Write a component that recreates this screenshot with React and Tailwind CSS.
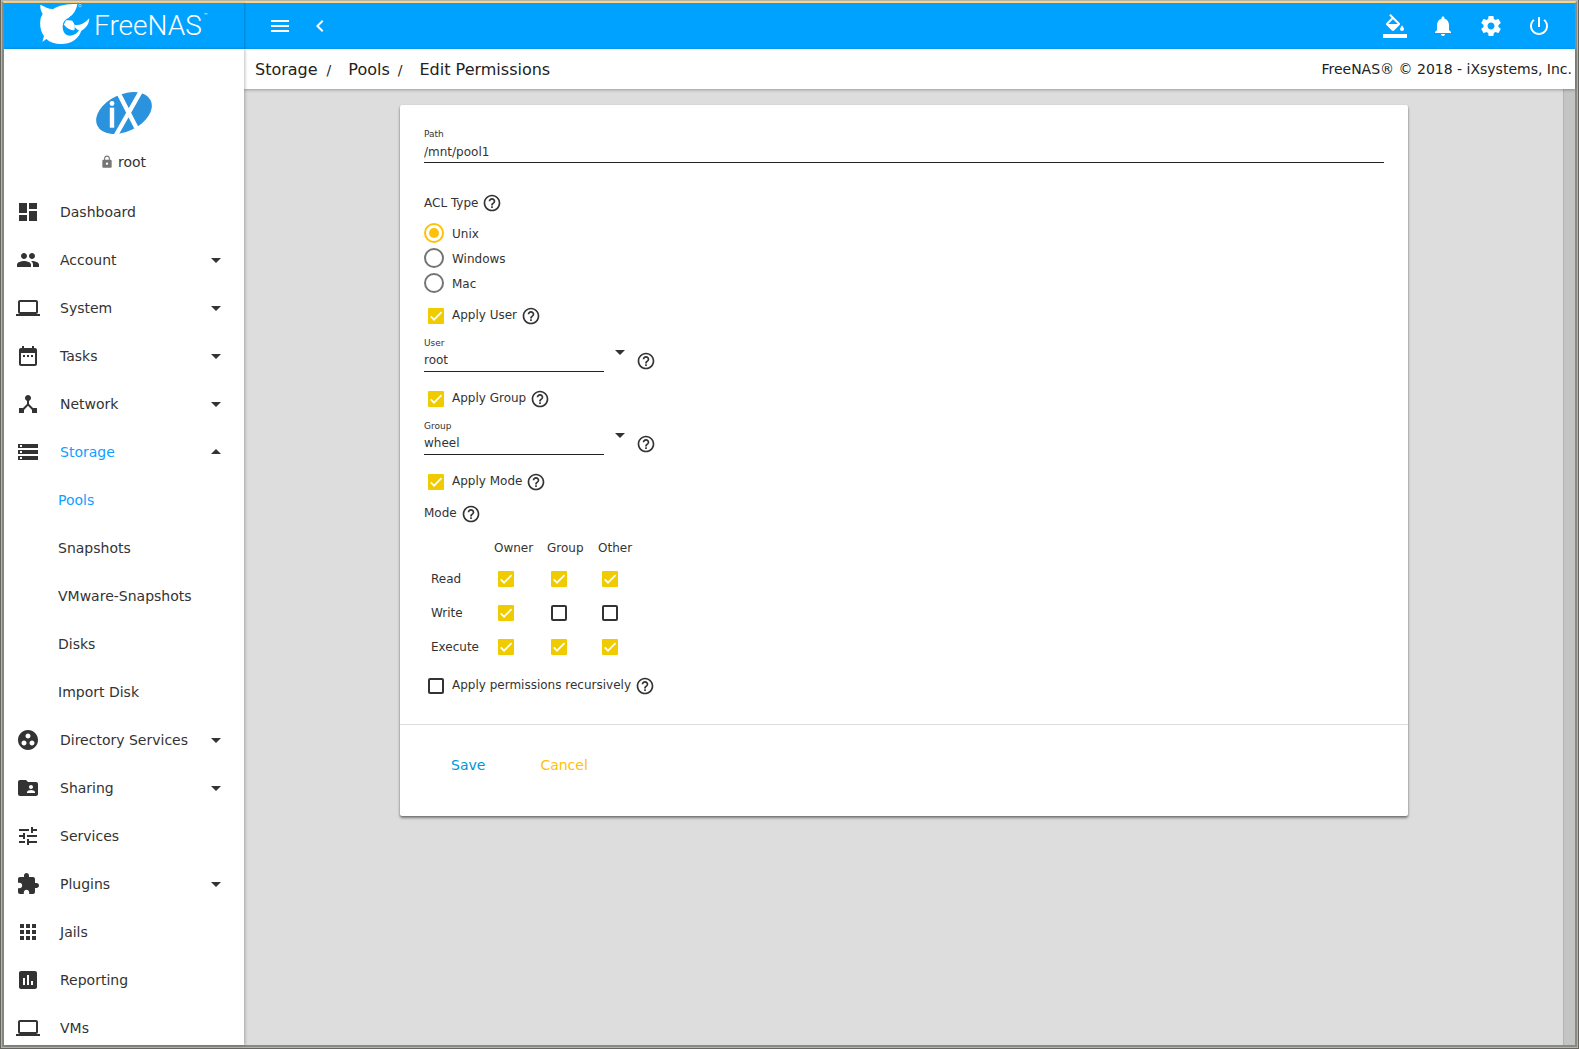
import React from "react";

const ICONS = {
  menu: "M3 18h18v-2H3v2zm0-5h18v-2H3v2zm0-7v2h18V6H3z",
  chevronLeft: "M15.41 7.41L14 6l-6 6 6 6 1.41-1.41L10.83 12z",
  fill: "M16.56 8.94L7.62 0 6.21 1.41l2.38 2.38-5.15 5.15c-.59.59-.59 1.54 0 2.12l5.5 5.5c.29.29.68.44 1.06.44s.77-.15 1.06-.44l5.5-5.5c.59-.58.59-1.53 0-2.12zM5.21 10L10 5.21 14.79 10H5.21zM19 11.5s-2 2.17-2 3.5c0 1.1.9 2 2 2s2-.9 2-2c0-1.33-2-3.5-2-3.5zM0 20h24v4H0z",
  bell: "M12 22c1.1 0 2-.9 2-2h-4c0 1.1.89 2 2 2zm6-6v-5c0-3.07-1.64-5.64-4.5-6.32V4c0-.83-.67-1.5-1.5-1.5s-1.5.67-1.5 1.5v.68C7.63 5.36 6 7.92 6 11v5l-2 2v1h16v-1l-2-2z",
  settings: "M19.43 12.98c.04-.32.07-.64.07-.98s-.03-.66-.07-.98l2.11-1.65c.19-.15.24-.42.12-.64l-2-3.46c-.12-.22-.39-.3-.61-.22l-2.49 1c-.52-.4-1.08-.73-1.69-.98l-.38-2.65C14.46 2.18 14.25 2 14 2h-4c-.25 0-.46.18-.49.42l-.38 2.65c-.61.25-1.17.59-1.69.98l-2.49-1c-.23-.09-.49 0-.61.22l-2 3.46c-.13.22-.07.49.12.64l2.11 1.65c-.04.32-.07.65-.07.98s.03.66.07.98l-2.11 1.65c-.19.15-.24.42-.12.64l2 3.46c.12.22.39.3.61.22l2.49-1c.52.4 1.08.73 1.69.98l.38 2.65c.03.24.24.42.49.42h4c.25 0 .46-.18.49-.42l.38-2.65c.61-.25 1.17-.59 1.69-.98l2.49 1c.23.09.49 0 .61-.22l2-3.46c.12-.22.07-.49-.12-.64l-2.11-1.65zM12 15.5c-1.93 0-3.5-1.57-3.5-3.5s1.57-3.5 3.5-3.5 3.5 1.57 3.5 3.5-1.57 3.5-3.5 3.5z",
  power: "M13 3h-2v10h2V3zm4.83 2.17l-1.42 1.42C17.99 7.86 19 9.81 19 12c0 3.87-3.13 7-7 7s-7-3.13-7-7c0-2.19 1.01-4.14 2.58-5.42L6.17 5.17C4.23 6.82 3 9.26 3 12c0 4.97 4.03 9 9 9s9-4.03 9-9c0-2.74-1.23-5.18-3.17-6.83z",
  lock: "M18 8h-1V6c0-2.76-2.24-5-5-5S7 3.24 7 6v2H6c-1.1 0-2 .9-2 2v10c0 1.1.9 2 2 2h12c1.1 0 2-.9 2-2V10c0-1.1-.9-2-2-2zm-6 9c-1.1 0-2-.9-2-2s.9-2 2-2 2 .9 2 2-.9 2-2 2zm3.1-9H8.9V6c0-1.71 1.39-3.1 3.1-3.1 1.71 0 3.1 1.39 3.1 3.1v2z",
  dashboard: "M3 13h8V3H3v10zm0 8h8v-6H3v6zm10 0h8V11h-8v10zm0-18v6h8V3h-8z",
  people: "M16 11c1.66 0 2.99-1.34 2.99-3S17.66 5 16 5c-1.66 0-3 1.34-3 3s1.34 3 3 3zm-8 0c1.66 0 2.99-1.34 2.99-3S9.66 5 8 5C6.34 5 5 6.34 5 8s1.34 3 3 3zm0 2c-2.33 0-7 1.17-7 3.5V19h14v-2.5c0-2.33-4.67-3.5-7-3.5zm8 0c-.29 0-.62.02-.97.05 1.16.84 1.97 1.97 1.97 3.45V19h6v-2.5c0-2.33-4.67-3.5-7-3.5z",
  laptop: "M20 18c1.1 0 1.99-.9 1.99-2L22 6c0-1.1-.9-2-2-2H4c-1.1 0-2 .9-2 2v10c0 1.1.9 2 2 2H0v2h24v-2h-4zM4 6h16v10H4V6z",
  calendar: "M9 11H7v2h2v-2zm4 0h-2v2h2v-2zm4 0h-2v2h2v-2zm2-7h-1V2h-2v2H8V2H6v2H5c-1.11 0-1.99.9-1.99 2L3 20c0 1.1.89 2 2 2h14c1.1 0 2-.9 2-2V6c0-1.1-.9-2-2-2zm0 16H5V9h14v11z",
  hub: "M17 16l-4-4V8.82C14.16 8.4 15 7.3 15 6c0-1.66-1.34-3-3-3S9 4.34 9 6c0 1.3.84 2.4 2 2.82V12l-4 4H3v5h5v-3.05l4-4.2 4 4.2V21h5v-5h-4z",
  storage: "M2 20h20v-4H2v4zm2-3h2v2H4v-2zM2 4v4h20V4H2zm4 3H4V5h2v2zm-4 7h20v-4H2v4zm2-3h2v2H4v-2z",
  groupWork: "M12 2C6.48 2 2 6.48 2 12s4.48 10 10 10 10-4.48 10-10S17.52 2 12 2zM8 17.5c-1.38 0-2.5-1.12-2.5-2.5s1.12-2.5 2.5-2.5 2.5 1.12 2.5 2.5-1.12 2.5-2.5 2.5zM9.5 8c0-1.38 1.12-2.5 2.5-2.5s2.5 1.12 2.5 2.5-1.12 2.5-2.5 2.5S9.5 9.38 9.5 8zm6.5 9.5c-1.38 0-2.5-1.12-2.5-2.5s1.12-2.5 2.5-2.5 2.5 1.12 2.5 2.5-1.12 2.5-2.5 2.5z",
  folderShared: "M20 6h-8l-2-2H4c-1.1 0-1.99.9-1.99 2L2 18c0 1.1.9 2 2 2h16c1.1 0 2-.9 2-2V8c0-1.1-.9-2-2-2zm-5 3c1.1 0 2 .9 2 2s-.9 2-2 2-2-.9-2-2 .9-2 2-2zm4 8h-8v-1c0-1.33 2.67-2 4-2s4 .67 4 2v1z",
  tune: "M3 17v2h6v-2H3zM3 5v2h10V5H3zm10 16v-2h8v-2h-8v-2h-2v6h2zM7 9v2H3v2h4v2h2V9H7zm14 4v-2H11v2h10zm-6-4h2V7h4V5h-4V3h-2v6z",
  extension: "M20.5 11H19V7c0-1.1-.9-2-2-2h-4V3.5C13 2.12 11.88 1 10.5 1S8 2.12 8 3.5V5H4c-1.1 0-1.99.9-1.99 2v3.8H3.5c1.49 0 2.7 1.21 2.7 2.7s-1.21 2.7-2.7 2.7H2V20c0 1.1.9 2 2 2h3.8v-1.5c0-1.49 1.21-2.7 2.7-2.7 1.49 0 2.7 1.21 2.7 2.7V22H17c1.1 0 2-.9 2-2v-4h1.5c1.38 0 2.5-1.12 2.5-2.5S21.88 11 20.5 11z",
  apps: "M4 8h4V4H4v4zm6 12h4v-4h-4v4zm-6 0h4v-4H4v4zm0-6h4v-4H4v4zm6 0h4v-4h-4v4zm6-10v4h4V4h-4zm-6 4h4V4h-4v4zm6 6h4v-4h-4v4zm0 6h4v-4h-4v4z",
  assessment: "M19 3H5c-1.1 0-2 .9-2 2v14c0 1.1.9 2 2 2h14c1.1 0 2-.9 2-2V5c0-1.1-.9-2-2-2zM9 17H7v-7h2v7zm4 0h-2V7h2v10zm4 0h-2v-4h2v4z",
  help: "M11 18h2v-2h-2v2zm1-16C6.48 2 2 6.48 2 12s4.48 10 10 10 10-4.48 10-10S17.52 2 12 2zm0 18c-4.41 0-8-3.59-8-8s3.59-8 8-8 8 3.59 8 8-3.59 8-8 8zm0-14c-2.21 0-4 1.79-4 4h2c0-1.1.9-2 2-2s2 .9 2 2c0 2-3 1.75-3 5h2c0-2.25 3-2.5 3-5 0-2.21-1.79-4-4-4z",
  down: "M7 10l5 5 5-5z",
  up: "M7 14l5-5 5 5z",
};

function Icon({ name, className = "size-6" }) {
  return (
    <svg viewBox="0 0 24 24" fill="currentColor" aria-hidden="true" className={`shrink-0 ${className}`}>
      <path d={ICONS[name]} />
    </svg>
  );
}

function IconButton({ name, label }) {
  return (
    <button type="button" aria-label={label} className="text-white">
      <Icon name={name} />
    </button>
  );
}

function Logo() {
  return (
    <a href="#home" aria-label="FreeNAS" className="block">
      <svg width="180" height="46" viewBox="0 0 180 46" fill="none" className="block">
        <g transform="scale(0.3333)">
          <path
            fill="#fff"
            d="M1 5C15 12 28 19 40 18C55 7 80 3 112 3C110 19 102 33 87 44C95 50 101 57 104 66C118 68 134 62 148 46C147 64 138 76 124 83C117 104 98 123 63 123C45 123 30 118 19 108L7 117L12 99C2 86 -2 68 2 46C3 40 9 35 7 31C3 25 0 16 1 5Z"
          />
          <path
            fill="#00a2ff"
            d="M87 44C76 48 69 56 68 68C67 86 76 98 91 98C103 97 112 91 117 82C109 79 104 74 103 65C98 61 94 56 87 52C104 54 110 56 114 60L104 44L92 40Z"
          />
          <path fill="#fff" d="M78 52C92 50 101 58 104 68C105 74 104 78 102 82C88 82 76 74 72 64Z" />
          <path fill="#00a2ff" d="M73 68C80 76 90 81 101 82L91 84C82 82 76 77 73 68Z" />
          <circle cx="120" cy="8" r="4" stroke="#fff" strokeWidth="1.5" />
        </g>
        <text x="54" y="32" fill="#fff" fontFamily="Roboto, sans-serif" fontWeight="300" fontSize="28">
          FreeNAS
        </text>
        <text x="164" y="14" fill="#fff" fontFamily="Roboto, sans-serif" fontSize="6">
          ™
        </text>
      </svg>
    </a>
  );
}

function CompanyMark() {
  return (
    <svg width="56" height="42" viewBox="0 0 56 42" className="block" role="img" aria-label="iX">
      <ellipse cx="28" cy="21" rx="29.500" ry="18.500" transform="rotate(-25 28 21)" fill="#2b93de" />
      <path d="M22 0L41 37M45-1L20 43" stroke="#fff" strokeWidth="4.400" />
      <path d="M16 15.700v20" stroke="#fff" strokeWidth="4.400" />
      <circle cx="16" cy="11.500" r="2.400" fill="#fff" />
    </svg>
  );
}

const NAV = [
  { label: "Dashboard", icon: "dashboard" },
  { label: "Account", icon: "people", caret: "down" },
  { label: "System", icon: "laptop", caret: "down" },
  { label: "Tasks", icon: "calendar", caret: "down" },
  { label: "Network", icon: "hub", caret: "down" },
  {
    label: "Storage",
    icon: "storage",
    caret: "up",
    active: true,
    children: ["Pools", "Snapshots", "VMware-Snapshots", "Disks", "Import Disk"],
  },
  { label: "Directory Services", icon: "groupWork", caret: "down" },
  { label: "Sharing", icon: "folderShared", caret: "down" },
  { label: "Services", icon: "tune" },
  { label: "Plugins", icon: "extension", caret: "down" },
  { label: "Jails", icon: "apps" },
  { label: "Reporting", icon: "assessment" },
  { label: "VMs", icon: "laptop" },
];

function NavItem({ item }) {
  return (
    <li>
      <a href={`#${item.label}`} className="flex h-12 items-center pr-4 pl-3">
        <Icon name={item.icon} />
        <span className={`ml-5 flex-1 whitespace-nowrap ${item.active ? "text-[#0e9fff]" : ""}`}>{item.label}</span>
        {item.caret && <Icon name={item.caret} />}
      </a>
      {item.children && (
        <ul>
          {item.children.map((child, i) => (
            <li key={child}>
              <a href={`#${child}`} className={`flex h-12 items-center pl-[54px] ${i === 0 ? "text-[#0e9fff]" : ""}`}>
                {child}
              </a>
            </li>
          ))}
        </ul>
      )}
    </li>
  );
}

function Sidebar() {
  return (
    <aside className="z-10 flex w-60 shrink-0 flex-col overflow-hidden bg-white text-sm text-[#333] shadow-[1px_0_3px_rgba(0,0,0,0.25)]">
      <div className="flex h-[139px] shrink-0 flex-col items-center pt-[43px]">
        <CompanyMark />
        <div className="mt-[18px] flex items-center gap-1 pr-0.5">
          <Icon name="lock" className="size-3.5 text-[#757575]" />
          <span className="leading-5">root</span>
        </div>
      </div>
      <nav>
        <ul>
          {NAV.map((item) => (
            <NavItem key={item.label} item={item} />
          ))}
        </ul>
      </nav>
    </aside>
  );
}

function Help({ className = "" }) {
  return (
    <button type="button" aria-label="Help" className={className}>
      <Icon name="help" className="size-5" />
    </button>
  );
}

function Checkbox({ id, checked = false, label }) {
  return (
    <span className="relative block size-4 shrink-0">
      <input
        id={id}
        type="checkbox"
        defaultChecked={checked}
        aria-label={label}
        className="peer block size-4 appearance-none rounded-xs border-2 border-[#333] checked:rounded-[1px] checked:border-[#f0cb00] checked:bg-[#f0cb00]"
      />
      <svg viewBox="0 0 24 24" fill="none" aria-hidden="true" className="pointer-events-none absolute inset-0 hidden size-4 peer-checked:block">
        <path d="M4.100 12.700L9 17.600 20.300 6.300" stroke="#fff" strokeWidth="2.600" />
      </svg>
    </span>
  );
}

function CheckRow({ id, label, checked, className }) {
  return (
    <div className={`flex h-5 items-center pl-1 ${className}`}>
      <Checkbox id={id} checked={checked} />
      <label htmlFor={id} className="mr-1 ml-2 pb-0.5">
        {label}
      </label>
      <Help />
    </div>
  );
}

function SelectRow({ id, label, value }) {
  return (
    <div className="mt-[11px] flex items-end gap-1">
      <div className="w-[180px]">
        <label htmlFor={id} className="block text-[9px] leading-3">
          {label}
        </label>
        <select id={id} className="mt-[3px] block h-5 w-full appearance-none border-b border-[#222] pb-[3px]">
          <option>{value}</option>
        </select>
      </div>
      <Icon name="down" className="mb-2 size-6" />
      <Help className="mb-px" />
    </div>
  );
}

const MODES = [
  ["Read", [true, true, true]],
  ["Write", [true, false, false]],
  ["Execute", [true, true, true]],
];
const CLASSES = ["Owner", "Group", "Other"];

function PermissionsForm() {
  return (
    <form className="rounded-xs bg-white text-xs text-[#333] shadow-[0_2px_3px_rgba(0,0,0,0.4),0_1px_2px_rgba(0,0,0,0.2)]">
      <div className="px-6 pt-[23px] pb-7">
        <label htmlFor="path" className="block text-[9px] leading-3">
          Path
        </label>
        <input id="path" defaultValue="/mnt/pool1" className="mt-1 block h-[19px] w-full border-b border-[#222] pb-0.5" />

        <fieldset className="mt-[30px]">
          <legend className="flex h-5 items-center gap-1">
            ACL Type
            <Help />
          </legend>
          <div className="mt-2.5 flex flex-col gap-[5px]">
            {["Unix", "Windows", "Mac"].map((type, i) => (
              <label key={type} className="flex h-5 items-center gap-2">
                <span className="relative block size-5">
                  <input
                    type="radio"
                    name="acl"
                    defaultChecked={i === 0}
                    className="peer block size-5 appearance-none rounded-full border-2 border-[#757575] checked:border-[#ffc107]"
                  />
                  <span className="pointer-events-none absolute inset-[5px] hidden rounded-full bg-[#ffc107] peer-checked:block" />
                </span>
                <span className="pt-0.5">{type}</span>
              </label>
            ))}
          </div>
        </fieldset>

        <CheckRow id="apply-user" label="Apply User" checked className="mt-[13px]" />
        <SelectRow id="user" label="User" value="root" />
        <CheckRow id="apply-group" label="Apply Group" checked className="mt-[17px]" />
        <SelectRow id="group" label="Group" value="wheel" />
        <CheckRow id="apply-mode" label="Apply Mode" checked className="mt-[17px]" />

        <div className="mt-3 flex h-5 items-center gap-1">
          <span className="pb-0.5">Mode</span>
          <Help />
        </div>
        <table className="mt-2.5 w-[214px] table-fixed text-left">
          <thead>
            <tr className="h-7">
              <th className="w-[70px] p-0" />
              <th className="w-[53px] p-0 font-normal">Owner</th>
              <th className="w-[51px] p-0 font-normal">Group</th>
              <th className="w-10 p-0 font-normal">Other</th>
            </tr>
          </thead>
          <tbody>
            {MODES.map(([mode, values]) => (
              <tr key={mode} className="h-[34px]">
                <th scope="row" className="p-0 pl-[7px] font-normal">
                  {mode}
                </th>
                {values.map((value, i) => (
                  <td key={CLASSES[i]} className="p-0 pl-1">
                    <Checkbox checked={value} label={`${mode} ${CLASSES[i]}`} />
                  </td>
                ))}
              </tr>
            ))}
          </tbody>
        </table>
        <CheckRow id="recursive" label="Apply permissions recursively" className="mt-3" />
      </div>
      <div className="flex gap-[23px] border-t border-[#ddd] px-[35px] pt-[22px] pb-[33px] text-sm">
        <button type="submit" className="h-9 px-4 text-[#0095d5]">
          Save
        </button>
        <button type="button" className="h-9 px-4 text-[#ffc107]">
          Cancel
        </button>
      </div>
    </form>
  );
}

export default function App() {
  return (
    <div className="h-screen border border-t-0 border-[#66665f] font-['DejaVu_Sans',sans-serif]">
      <div className="h-full border border-[#b4b4ac]">
        <div className="flex h-full flex-col border-2 border-[#888a84] border-t-[#fdd780]">
          <header className="flex h-[46px] shrink-0 bg-[#00a2ff]">
            <div className="w-60 shrink-0 pl-9 shadow-[1px_0_2px_rgba(0,0,0,0.2)]">
              <Logo />
            </div>
            <div className="flex flex-1 items-center gap-4 pr-6 pl-6">
              <IconButton name="menu" label="Toggle menu" />
              <IconButton name="chevronLeft" label="Collapse menu" />
              <div className="ml-auto flex gap-6">
                <IconButton name="fill" label="Theme" />
                <IconButton name="bell" label="Notifications" />
                <IconButton name="settings" label="Settings" />
                <IconButton name="power" label="Power" />
              </div>
            </div>
          </header>
          <div className="flex min-h-0 flex-1">
            <Sidebar />
            <div className="flex min-w-0 flex-1 flex-col">
              <div className="z-[1] flex h-10 shrink-0 items-center justify-between bg-white pr-[3px] pl-[11px] text-[#222] shadow-[0_1px_3px_rgba(0,0,0,0.3)]">
                <nav aria-label="Breadcrumb" className="flex items-center pt-0.5">
                  <a href="#storage">Storage</a>
                  <span className="mr-[17px] ml-[9px] text-sm">/</span>
                  <a href="#pools">Pools</a>
                  <span className="mr-[17px] ml-2 text-sm">/</span>
                  <span>Edit Permissions</span>
                </nav>
                <span className="text-sm">FreeNAS® © 2018 - iXsystems, Inc.</span>
              </div>
              <div className="flex min-h-0 flex-1">
                <main className="min-w-0 flex-1 bg-[#ddd] pt-4 pr-[155px] pl-[156px]">
                  <PermissionsForm />
                </main>
                <div className="w-3 shrink-0 border-l border-[#b1b3b2] bg-[#c3c5c4]" />
              </div>
            </div>
          </div>
        </div>
      </div>
    </div>
  );
}
